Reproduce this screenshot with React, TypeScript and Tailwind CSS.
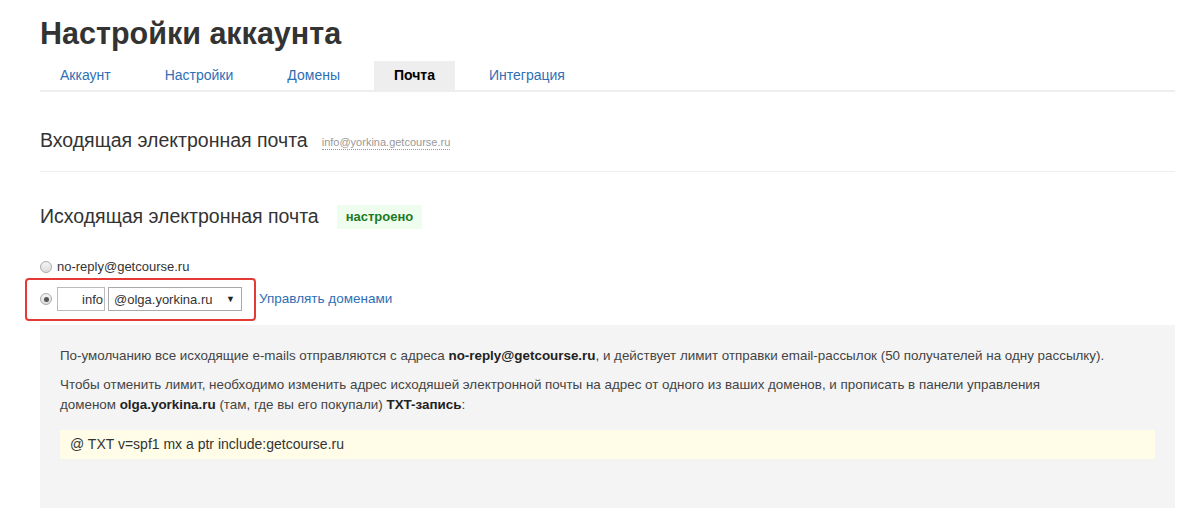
const tabs = ["Аккаунт", "Настройки", "Домены", "Почта", "Интеграция"];

export default function App() {
  return (
    <div className="min-h-[525px] bg-white px-10 pt-[14px] font-['Liberation_Sans',Arial,sans-serif] text-[#333]">
      <div className="w-[1135px]">
        <h1 className="text-[30.5px] font-bold leading-[38px] text-[#333]">Настройки аккаунта</h1>

        <div className="mt-[9px] flex border-b-2 border-[#eee]">
          {tabs.map((t) => (
            <div
              key={t}
              className={
                t === "Почта"
                  ? "mr-[14px] bg-[#eee] px-5 text-[14px] font-bold leading-[29px] text-black"
                  : "mr-[14px] px-5 text-[14px] leading-[29px] text-[#2f6fb5]"
              }
            >
              {t}
            </div>
          ))}
        </div>

        <div className="flex h-[80px] items-center border-b border-[#eee] pt-[18px]">
          <span className="text-[19.5px] font-light text-[#333]">Входящая электронная почта</span>
          <span className="ml-[14px] mt-[3px] border-b border-dotted border-[#999] text-[11px] leading-[14px] text-[#999]">
            info@yorkina.getcourse.ru
          </span>
        </div>

        <div className="mt-[30px] flex items-center">
          <span className="text-[19.5px] font-light text-[#333]">Исходящая электронная почта</span>
          <span className="ml-[18px] bg-[#effdef] px-[9px] text-[13px] font-bold leading-[24px] text-[#1d7a22]">
            настроено
          </span>
        </div>

        <div className="mt-[26px] flex items-center text-[13px]">
          <span className="h-[12px] w-[12px] rounded-full border border-[#aaa] bg-gradient-to-b from-[#f4f4f4] to-[#ddd]" />
          <span className="ml-[5px] text-[#333]">no-reply@getcourse.ru</span>
        </div>

        <div className="mt-[1px] flex items-center text-[13px]">
          <div className="-ml-[15px] flex h-[43px] items-center rounded-[4px] border-2 border-[#e53935] pl-[13px] pr-[12px]">
            <span className="flex h-[12px] w-[12px] items-center justify-center rounded-full border border-[#aaa] bg-gradient-to-b from-[#f4f4f4] to-[#ddd]">
              <span className="h-[5px] w-[5px] rounded-full bg-[#555]" />
            </span>
            <div className="ml-[5px] flex h-[24px] w-[48px] items-center justify-end border border-[#bbb] bg-white pr-[1px] text-[13px] text-[#333]">
              info
            </div>
            <div className="ml-[3px] flex h-[24px] w-[134px] items-center justify-between border border-[#aaa] bg-white pl-[5px] pr-[6px] text-[13px] text-[#333]">
              <span>@olga.yorkina.ru</span>
              <span className="text-[9px] text-[#222]">▼</span>
            </div>
          </div>
          <a className="ml-[3px] text-[13.5px] text-[#2f6fb5]">Управлять доменами</a>
        </div>

        <div className="mt-[4px] h-[183px] bg-[#f4f4f4] px-5 pt-[21px] text-[13.4px] text-[#444]">
          <p className="leading-[20px]">
            По-умолчанию все исходящие e-mails отправляются с адреса{" "}
            <b className="text-[#222]">no-reply@getcourse.ru</b>, и действует лимит отправки email-рассылок (50
            получателей на одну рассылку).
          </p>
          <p className="mt-[9px] w-[1010px] leading-[20px]">
            Чтобы отменить лимит, необходимо изменить адрес исходяшей электронной почты на адрес от одного из ваших
            доменов, и прописать в панели управления доменом <b className="text-[#222]">olga.yorkina.ru</b> (там, где
            вы его покупали) <b className="text-[#222]">TXT-запись</b>:
          </p>
          <div className="mt-[15px] flex h-[29px] items-center bg-[#fffde8] px-[10px] text-[14px] text-[#333]">
            @ TXT v=spf1 mx a ptr include:getcourse.ru
          </div>
        </div>
      </div>
    </div>
  );
}
